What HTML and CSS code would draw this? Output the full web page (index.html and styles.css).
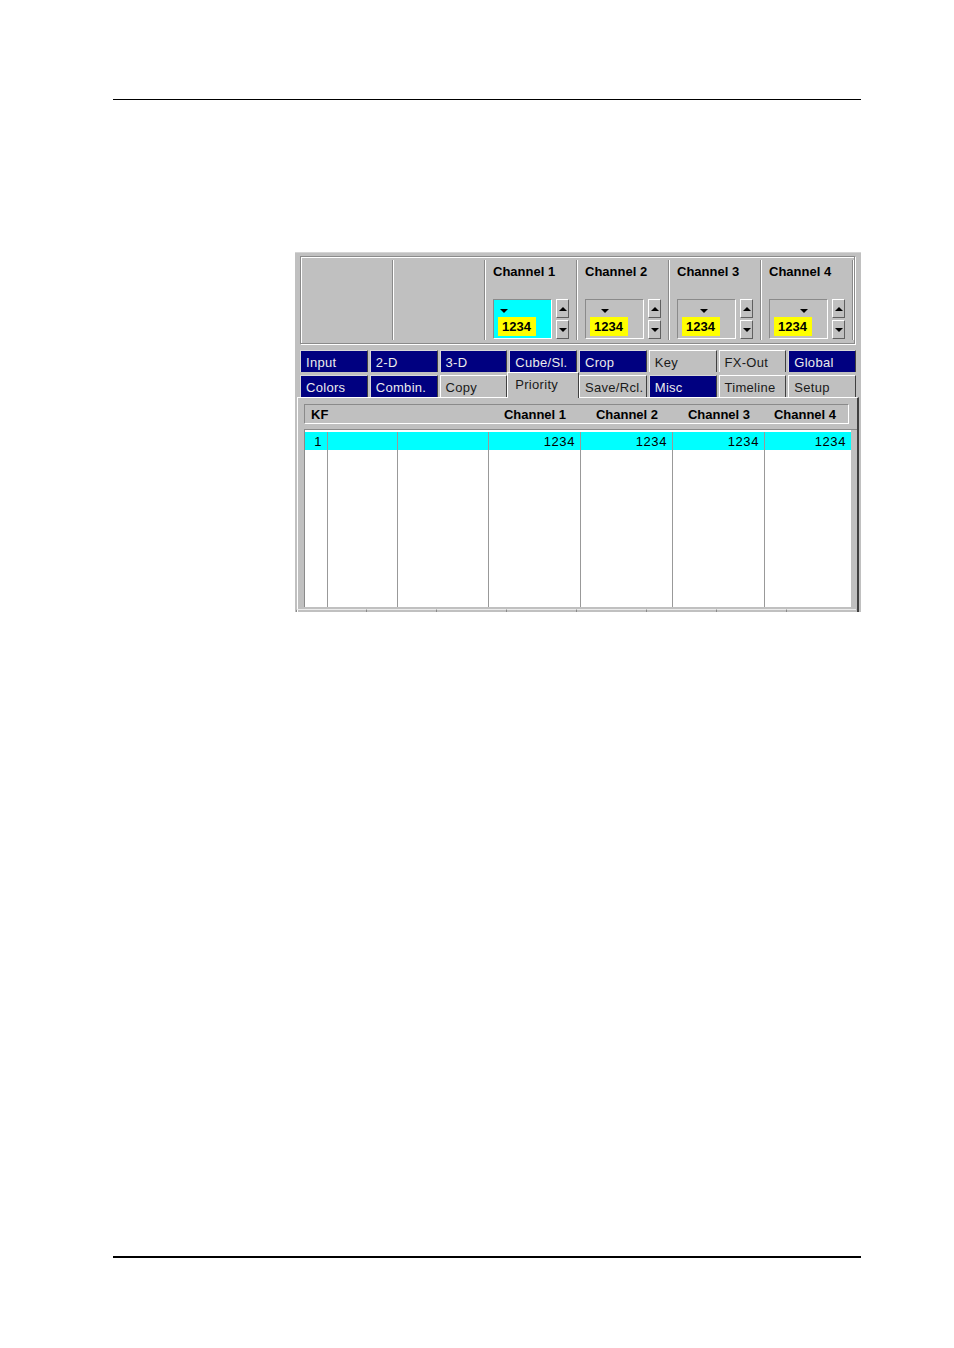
FILE: index.html
```html
<!DOCTYPE html>
<html>
<head>
<meta charset="utf-8">
<link rel="stylesheet" href="styles.css">
</head>
<body>
<div class="page">
  <div class="rule-top"></div>
  <div class="panel">
    <div class="topbox">
      <div class="tcol first"></div>
      <div class="sep"></div>
      <div class="tcol"></div>
      <div class="sep"></div>
      <div class="tcol chan">
        <div class="clabel">Channel 1</div>
        <div class="ctrl">
          <div class="combo active"><div class="darr a1"></div><div class="val">1234</div></div>
          <div class="spin"><div class="sbtn"><div class="uarr"></div></div><div class="sbtn"><div class="darr"></div></div></div>
        </div>
      </div>
      <div class="sep"></div>
      <div class="tcol chan">
        <div class="clabel">Channel 2</div>
        <div class="ctrl">
          <div class="combo"><div class="darr a2"></div><div class="val">1234</div></div>
          <div class="spin"><div class="sbtn"><div class="uarr"></div></div><div class="sbtn"><div class="darr"></div></div></div>
        </div>
      </div>
      <div class="sep"></div>
      <div class="tcol chan">
        <div class="clabel">Channel 3</div>
        <div class="ctrl">
          <div class="combo"><div class="darr a3"></div><div class="val">1234</div></div>
          <div class="spin"><div class="sbtn"><div class="uarr"></div></div><div class="sbtn"><div class="darr"></div></div></div>
        </div>
      </div>
      <div class="sep"></div>
      <div class="tcol chan">
        <div class="clabel">Channel 4</div>
        <div class="ctrl">
          <div class="combo"><div class="darr a4"></div><div class="val">1234</div></div>
          <div class="spin"><div class="sbtn"><div class="uarr"></div></div><div class="sbtn"><div class="darr"></div></div></div>
        </div>
      </div>
      <div class="sep"></div>
    </div>

    <div class="tabs">
      <div class="tab blue">Input</div>
      <div class="tab blue">2-D</div>
      <div class="tab blue">3-D</div>
      <div class="tab blue">Cube/Sl.</div>
      <div class="tab blue">Crop</div>
      <div class="tab">Key</div>
      <div class="tab">FX-Out</div>
      <div class="tab blue">Global</div>
      <div class="tab blue">Colors</div>
      <div class="tab blue">Combin.</div>
      <div class="tab">Copy</div>
      <div class="tab sel">Priority</div>
      <div class="tab">Save/Rcl.</div>
      <div class="tab blue">Misc</div>
      <div class="tab">Timeline</div>
      <div class="tab">Setup</div>
    </div>

    <div class="content">
      <div class="thead">
        <div class="hc kf">KF</div>
        <div class="hc"></div>
        <div class="hc"></div>
        <div class="hc">Channel 1</div>
        <div class="hc">Channel 2</div>
        <div class="hc">Channel 3</div>
        <div class="hc last">Channel 4</div>
      </div>
      <div class="tbody">
        <div class="grid">
          <div class="c hl first">1</div>
          <div class="c hl"></div>
          <div class="c hl"></div>
          <div class="c hl">1234</div>
          <div class="c hl">1234</div>
          <div class="c hl">1234</div>
          <div class="c hl">1234</div>
          <div class="c first"></div>
          <div class="c"></div>
          <div class="c"></div>
          <div class="c"></div>
          <div class="c"></div>
          <div class="c"></div>
          <div class="c"></div>
        </div>
      </div>
      <div class="strip">
        <div class="seg"></div><div class="seg"></div><div class="seg"></div><div class="seg"></div>
        <div class="seg"></div><div class="seg"></div><div class="seg"></div><div class="seg"></div>
      </div>
    </div>
  </div>
  <div class="rule-bottom"></div>
</div>
</body>
</html>
```
FILE: styles.css
```css
html, body {
  margin: 0;
  padding: 0;
  background: #fff;
}
body {
  font-family: "Liberation Sans", Arial, sans-serif;
  font-size: 13px;
  color: #000;
}
.page {
  width: 954px;
  height: 1348px;
  overflow: hidden;
}
.rule-top {
  margin: 99px 0 0 113px;
  width: 748px;
  height: 1px;
  background: #000;
}
.rule-bottom {
  margin: 644px 0 0 113px;
  width: 748px;
  height: 2px;
  background: #000;
}
.panel {
  margin: 152px 0 0 295px;
  width: 566px;
  height: 360px;
  background: #c0c0c0;
  overflow: hidden;
  box-sizing: border-box;
  border-top: 1px solid #d4d4d4;
  padding-top: 3px;
}

/* top box */
.topbox {
  margin-left: 5px;
  width: 555px;
  height: 88px;
  box-sizing: border-box;
  border: 1px solid #8a8a8a;
  box-shadow: inset 1px 1px 0 #fff, 1px 1px 0 #fff;
  display: flex;
}
.tcol {
  width: 90px;
  flex: none;
}
.tcol.first {
  width: 91px;
}
.sep {
  width: 0;
  flex: none;
  margin: 3px 0;
  border-left: 1px solid #8a8a8a;
  border-right: 1px solid #fff;
}
.chan {
  padding: 7px 0 0 7px;
  box-sizing: border-box;
}
.clabel {
  font-weight: bold;
  font-size: 13px;
  line-height: 16px;
  height: 16px;
  white-space: nowrap;
}
.ctrl {
  margin-top: 19px;
  display: flex;
  gap: 4px;
}
.combo {
  width: 59px;
  height: 40px;
  box-sizing: border-box;
  border-top: 1px solid #8a8a8a;
  border-left: 1px solid #8a8a8a;
  border-bottom: 1px solid #fff;
  border-right: 1px solid #fff;
  background: #c0c0c0;
}
.combo.active {
  background: #00ffff;
}
.darr {
  width: 0;
  height: 0;
  border-left: 4px solid transparent;
  border-right: 4px solid transparent;
  border-top: 4px solid #000;
}
.uarr {
  width: 0;
  height: 0;
  border-left: 4px solid transparent;
  border-right: 4px solid transparent;
  border-bottom: 4px solid #000;
}
.combo .darr {
  margin-top: 9px;
}
.darr.a1 { margin-left: 6px; }
.darr.a2 { margin-left: 15px; }
.darr.a3 { margin-left: 22px; }
.darr.a4 { margin-left: 30px; }
.val {
  margin: 4px 0 0 4px;
  width: 38px;
  height: 19px;
  box-sizing: border-box;
  padding-left: 4px;
  background: #ffff00;
  font-weight: bold;
  font-size: 13px;
  line-height: 19px;
}
.spin {
  display: flex;
  flex-direction: column;
  gap: 2px;
}
.sbtn {
  width: 13px;
  height: 19px;
  box-sizing: border-box;
  border-top: 1px solid #fff;
  border-left: 1px solid #fff;
  border-right: 1px solid #606060;
  border-bottom: 1px solid #606060;
  background: #c0c0c0;
  display: flex;
  align-items: center;
  justify-content: center;
}

/* tabs */
.tabs {
  margin: 6px 0 0 5px;
  width: 556px;
  display: grid;
  grid-template-columns: repeat(8, 1fr);
  column-gap: 2px;
  row-gap: 3px;
}
.tab {
  height: 22px;
  box-sizing: border-box;
  border-top: 1px solid #fff;
  border-left: 1px solid #fff;
  border-right: 1px solid #404040;
  padding: 1px 0 0 5px;
  line-height: 22px;
  font-size: 13px;
  letter-spacing: 0.3px;
  color: #1a1a1a;
  background: #c0c0c0;
  white-space: nowrap;
  overflow: hidden;
}
.tab.blue {
  background: #000080;
  color: #ececec;
  border-top-color: #d8d8d8;
  border-left-color: #d8d8d8;
}
.tab.sel {
  position: relative;
  z-index: 1;
  height: 26px;
  margin: -3px -2px -1px;
  padding: 1px 0 0 7px;
  line-height: 22px;
}

/* content */
.content {
  margin-left: 2px;
  width: 562px;
  height: 215px;
  box-sizing: border-box;
  border-top: 1px solid #fff;
  border-left: 1px solid #fff;
  border-right: 2px solid #404040;
  padding: 6px 0 0 6px;
}
.thead {
  width: 545px;
  height: 20px;
  box-sizing: border-box;
  border-top: 1px solid #8a8a8a;
  border-left: 1px solid #8a8a8a;
  border-bottom: 1px solid #fff;
  border-right: 1px solid #fff;
  display: grid;
  grid-template-columns: 22px 70px 91px 92px 92px 92px 84px;
  font-weight: bold;
  font-size: 13px;
  line-height: 18px;
  padding-top: 1px;
}
.hc {
  text-align: right;
  padding-right: 14px;
  white-space: nowrap;
}
.hc.last {
  padding-right: 12px;
}
.hc.kf {
  text-align: left;
  padding: 0 0 0 6px;
}
.tbody {
  margin-top: 5px;
  width: 553px;
  height: 178px;
  box-sizing: border-box;
  border-top: 1px solid #8a8a8a;
  border-left: 1px solid #8a8a8a;
}
.grid {
  width: 546px;
  height: 177px;
  box-sizing: border-box;
  padding-top: 2px;
  background: #fff;
  display: grid;
  grid-template-columns: 22px 70px 91px 92px 92px 92px 87px;
  grid-template-rows: 18px 1fr;
}
.c {
  border-left: 1px solid #999;
  text-align: right;
  padding: 1px 5px 0 0;
  font-size: 13px;
  line-height: 17px;
  letter-spacing: 0.6px;
}
.c.first {
  border-left: none;
}
.c.hl {
  background: #00ffff;
}
.strip {
  display: flex;
  margin-left: -8px;
  margin-top: 2px;
}
.seg {
  width: 69px;
  height: 2px;
  flex: none;
  border-top: 1px solid #ececec;
  border-left: 1px solid #8a8a8a;
}
```
